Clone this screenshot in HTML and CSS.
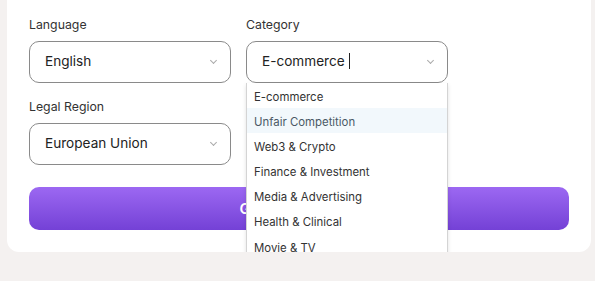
FILE: index.html
```html
<!DOCTYPE html>
<html lang="en">

<head>
    <meta charset="UTF-8" />
    <meta name="viewport" content="width=device-width, initial-scale=1" />
    <title>Document Generator</title>
    <link rel="stylesheet" href="styles.css">
</head>

<body>

    <!-- Settings Card -->
    <div class="card">
        <div class="form-grid">
            <div class="field">
                <label class="field-label">Language</label>
                <div class="select">
                    <span class="select-value">English</span>
                    <span class="chevron"></span>
                </div>
            </div>

            <div class="field combo">
                <label class="field-label">Category</label>
                <div class="select">
                    <span class="select-value">E-commerce<span class="caret"></span></span>
                    <span class="chevron"></span>
                </div>

                <!-- Open dropdown -->
                <ul class="dropdown">
                    <li>E-commerce</li>
                    <li class="hover">Unfair Competition</li>
                    <li>Web3 &amp; Crypto</li>
                    <li>Finance &amp; Investment</li>
                    <li>Media &amp; Advertising</li>
                    <li>Health &amp; Clinical</li>
                    <li>Movie &amp; TV</li>
                </ul>
            </div>

            <div class="field">
                <label class="field-label">Legal Region</label>
                <div class="select">
                    <span class="select-value">European Union</span>
                    <span class="chevron"></span>
                </div>
            </div>
        </div>

        <button class="btn-generate">Generate Report</button>
    </div>

</body>

</html>
```

FILE: styles.css
```css
body {
    font-family: 'Inter', 'Noto Sans', sans-serif;
    background-color: #f4f1f0;
    color: #222;
    margin: 0;
}

.card {
    background-color: #fff;
    margin: 0 4px 0 7px;
    padding: 16px 22px 22px;
    border-radius: 0 0 12px 12px;
}

.form-grid {
    display: grid;
    grid-template-columns: 202px 202px;
    column-gap: 15px;
    row-gap: 15px;
}

.field {
    display: flex;
    flex-direction: column;
    gap: 8px;
}

.combo {
    position: relative;
}

.field-label {
    font-size: 12.3px;
    line-height: 16px;
    padding-top: 1px;
    color: #333;
}

.select {
    height: 40px;
    border: 1px solid #8a8a8a;
    border-radius: 10px;
    display: flex;
    align-items: center;
    justify-content: space-between;
    padding: 0 14px 0 15px;
}

.select-value {
    font-size: 13.6px;
    color: #222;
    display: flex;
    align-items: center;
    margin-top: -2px;
}

.caret {
    display: inline-block;
    width: 1px;
    height: 16px;
    background-color: #222;
    margin-left: 4px;
}

.chevron {
    width: 4px;
    height: 4px;
    border-right: 1px solid #aaa;
    border-bottom: 1px solid #aaa;
    transform: rotate(45deg);
    margin-top: -3px;
}

.dropdown {
    position: absolute;
    top: 67px;
    left: 0;
    width: 200px;
    margin: 0;
    padding: 0;
    list-style: none;
    background-color: #fff;
    border: 1px solid #d4d4d4;
    border-top: none;
    border-radius: 0 0 3px 3px;
    box-shadow: 0 2px 4px rgba(0, 0, 0, 0.12);
    z-index: 2;
}

.dropdown li {
    height: 23.1px;
    padding: 2px 0 0 7px;
    line-height: 25px;
    font-size: 11.4px;
    color: #333;
}

.dropdown li.hover {
    background-color: #f2f8fc;
    color: #4a5866;
}

.btn-generate {
    display: block;
    width: 100%;
    height: 43px;
    margin-top: 22px;
    border: none;
    border-radius: 10px;
    background: linear-gradient(180deg, #9c68f2 0%, #7441d6 100%);
    color: #fff;
    font-family: inherit;
    font-size: 15px;
    font-weight: 600;
}
```
